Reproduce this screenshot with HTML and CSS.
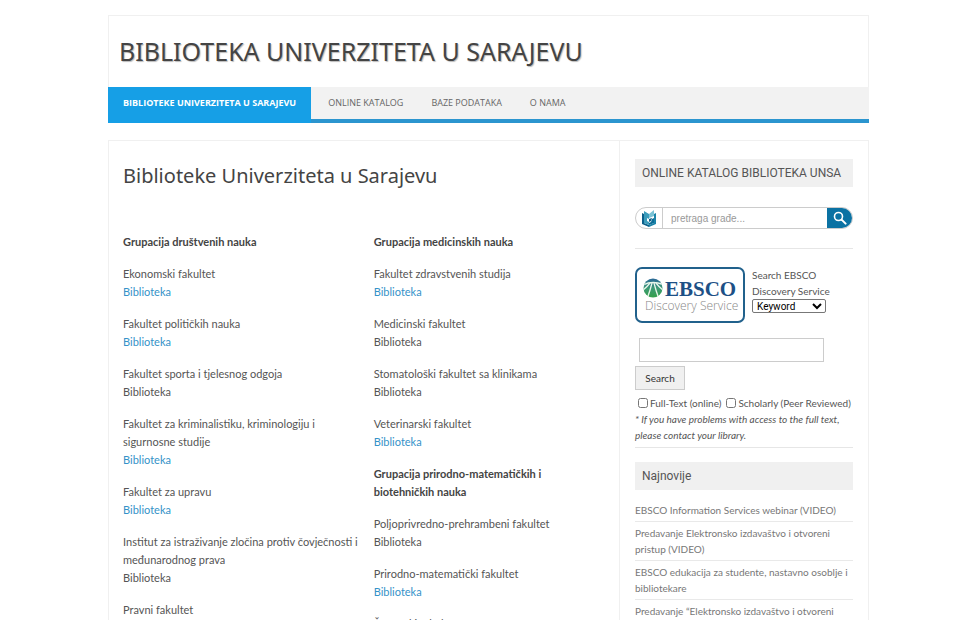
FILE: index.html
```html
<!DOCTYPE html>
<html lang="bs">
<head>
<meta charset="utf-8">
<meta name="viewport" content="width=device-width, initial-scale=1">
<title>Biblioteke Univerziteta u Sarajevu</title>
<link rel="stylesheet" href="styles.css">
</head>
<body>
<header class="site-header">
  <div class="brand">BIBLIOTEKA UNIVERZITETA U SARAJEVU</div>
  <nav class="menu">
    <a class="menu-link active" href="#">BIBLIOTEKE UNIVERZITETA U SARAJEVU</a>
    <a class="menu-link" href="#">ONLINE KATALOG</a>
    <a class="menu-link" href="#">BAZE PODATAKA</a>
    <a class="menu-link" href="#">O NAMA</a>
  </nav>
</header>
<div class="page">
  <main class="content">
    <h1 class="page-title">Biblioteke Univerziteta u Sarajevu</h1>
    <div class="columns">
      <section class="column">
        <h2>Grupacija društvenih nauka</h2>
        <p>Ekonomski fakultet<br><a href="#">Biblioteka</a></p>
        <p>Fakultet političkih nauka<br><a href="#">Biblioteka</a></p>
        <p>Fakultet sporta i tjelesnog odgoja<br>Biblioteka</p>
        <p>Fakultet za kriminalistiku, kriminologiju i sigurnosne studije<br><a href="#">Biblioteka</a></p>
        <p>Fakultet za upravu<br><a href="#">Biblioteka</a></p>
        <p>Institut za istraživanje zločina protiv čovječnosti i međunarodnog prava<br>Biblioteka</p>
        <p>Pravni fakultet</p>
      </section>
      <section class="column">
        <h2>Grupacija medicinskih nauka</h2>
        <p>Fakultet zdravstvenih studija<br><a href="#">Biblioteka</a></p>
        <p>Medicinski fakultet<br>Biblioteka</p>
        <p>Stomatološki fakultet sa klinikama<br>Biblioteka</p>
        <p>Veterinarski fakultet<br><a href="#">Biblioteka</a></p>
        <h2>Grupacija prirodno-matematičkih i biotehničkih nauka</h2>
        <p>Poljoprivredno-prehrambeni fakultet<br>Biblioteka</p>
        <p>Prirodno-matematički fakultet<br><a href="#">Biblioteka</a></p>
        <p>Šumarski fakultet</p>
      </section>
    </div>
  </main>
  <aside class="sidebar">
    <section class="widget">
      <h3 class="widget-title">ONLINE KATALOG BIBLIOTEKA UNSA</h3>
      <form class="catalog">
        <span class="catalog-logo">
          <svg viewBox="0 0 16 18" width="16" height="18" aria-hidden="true">
            <path d="M1 4l2 1v9l5 2v2l-7-3z" fill="#0b5f8a"/>
            <path d="M15 4l-2 1v9l-5 2v2l7-3z" fill="#1a83a8"/>
            <path d="M3 2l5 3v5l-2-1v3l2 1v3l-5-2z" fill="#3b9cbb"/>
            <path d="M13 1L8 5v4l5-2z" fill="#7cc3d6"/>
            <path d="M13 9l-2 1-1 3-2 1v2l5-2z" fill="#0b6c96"/>
            <path d="M8 10l3-1-1 3-2 1z" fill="#0b5f8a"/>
          </svg>
        </span>
        <input class="catalog-input" type="text" placeholder="pretraga građe..." aria-label="pretraga građe">
        <button class="catalog-button" type="button" aria-label="Traži">
          <svg viewBox="0 0 14 14" width="14" height="14" aria-hidden="true">
            <circle cx="5.500" cy="5.500" r="4" fill="none" stroke="#fff" stroke-width="1.600"/>
            <path d="M8.600 8.600l4 4" stroke="#fff" stroke-width="2" stroke-linecap="round"/>
          </svg>
        </button>
      </form>
    </section>
    <section class="widget compact">
      <form>
        <div class="ebsco">
          <svg class="ebsco-logo" viewBox="0 0 110 56" width="110" height="56" role="img" aria-label="EBSCO Discovery Service">
            <defs>
              <linearGradient id="field" x1="0" y1="0" x2="0" y2="1">
                <stop offset="0" stop-color="#2a6797"/>
                <stop offset=".5" stop-color="#3d9a76"/>
                <stop offset="1" stop-color="#35a04a"/>
              </linearGradient>
              <clipPath id="disc"><circle cx="18" cy="21" r="9.500"/></clipPath>
            </defs>
            <rect x="1" y="1" width="108" height="54" rx="6" fill="#fff" stroke="#21618c" stroke-width="2"/>
            <circle cx="18" cy="21" r="9.500" fill="url(#field)"/>
            <g clip-path="url(#disc)" fill="none" stroke="#e8f6ea" stroke-width="1.300">
              <path d="M8 18q10-5 21 0"/>
              <path d="M17 16q-2 8-5 16M19 16q2 8 5 16M15 16q-3 4-8 8M21 16q3 4 8 8"/>
            </g>
            <text x="30" y="29" class="logo-name">EBSCO</text>
            <text x="10" y="43" class="logo-sub">Discovery Service</text>
          </svg>
          <div class="ebsco-side">
            <label for="field-type">Search EBSCO Discovery Service</label>
            <select id="field-type" class="field-type"><option>Keyword</option><option>Title</option><option>Author</option></select>
          </div>
        </div>
        <input class="query" type="text" aria-label="Search EBSCO">
        <button class="search" type="button">Search</button>
        <div class="limits">
          <label><input type="checkbox">Full-Text (online)</label>
          <label><input type="checkbox">Scholarly (Peer Reviewed)</label>
        </div>
        <p class="note">* If you have problems with access to the full text, please contact your library.</p>
      </form>
    </section>
    <section class="widget">
      <h3 class="widget-title">Najnovije</h3>
      <ul class="news">
        <li><a href="#">EBSCO Information Services webinar (VIDEO)</a></li>
        <li><a href="#">Predavanje Elektronsko izdavaštvo i otvoreni pristup (VIDEO)</a></li>
        <li><a href="#">EBSCO edukacija za studente, nastavno osoblje i bibliotekare</a></li>
        <li><a href="#">Predavanje “Elektronsko izdavaštvo i otvoreni</a></li>
      </ul>
    </section>
  </aside>
</div>
</body>
</html>
```
FILE: styles.css
```css
* { box-sizing: border-box; }
html { height: 100%; overflow: hidden; }
body {
  margin: 0;
  padding: 15px 106px 0 108px;
  background: #fff;
  color: #555;
  font: 11px/18px Lato, "Noto Sans", sans-serif;
}
a { color: #3492c8; text-decoration: none; }
h1, h2, h3, p, ul { margin: 0; padding: 0; }
input, button, select { font-family: inherit; margin: 0; }

.site-header { border: 1px solid #f0f0f0; border-bottom: 0; }
.brand {
  padding: 17px 10px 18px;
  color: #444;
  font-family: "Noto Sans", sans-serif;
  font-size: 25px;
  line-height: 36px;
  text-shadow: 1px 1px 1px #bbb;
  white-space: nowrap;
}
.menu {
  display: flex;
  margin: 0 -1px;
  background: #f2f2f2;
  border-bottom: 4px solid #2b95cf;
  font-family: "Open Sans", sans-serif;
}
.menu-link {
  padding: 0 14px;
  color: #666;
  font-size: 9px;
  line-height: 32px;
}
.menu-link.active {
  margin: 0 3px -4px 0;
  padding: 0 15px 4px;
  background: #169fe6;
  color: #fff;
  font-weight: 700;
}

.page {
  display: grid;
  grid-template-columns: minmax(0, 1fr) 249px;
  margin-top: 17px;
  border: 1px solid #f0f0f0;
  border-bottom: 0;
}
.content { padding: 19px 14px 0; }
.page-title {
  color: #444;
  font-family: "Noto Sans", sans-serif;
  font-size: 20px;
  font-weight: 400;
  line-height: 32px;
}
.columns {
  display: grid;
  grid-template-columns: 51fr 49fr;
  gap: 10px;
  margin-top: 41px;
}
.column h2 {
  margin-bottom: 14px;
  padding-right: 40px;
  color: #444;
  font-size: 11px;
  font-weight: 700;
  line-height: 18px;
}
.column p { margin-bottom: 14px; }

.sidebar {
  padding: 18px 15px 0;
  border-left: 1px solid #f0f0f0;
  line-height: 16px;
}
.widget { margin-bottom: 18px; }
.widget.compact { margin-bottom: 14px; }
.widget:not(:last-child) { border-bottom: 1px solid #e6e6e6; }
.widget-title {
  padding: 0 7px;
  background: #f0f0f0;
  color: #555;
  font-family: Roboto, sans-serif;
  font-size: 12px;
  font-weight: 400;
  line-height: 28px;
  white-space: nowrap;
}
.catalog {
  display: flex;
  height: 22px;
  margin: 20px 0 19px;
  border: 1px solid #ccc;
  border-radius: 11px;
  overflow: hidden;
}
.catalog-logo { display: grid; place-items: center; width: 27px; border-right: 1px solid #ccc; }
.catalog-input { flex: 1; min-width: 0; padding: 0 8px; border: 0; font: 10px "Liberation Sans", sans-serif; }
.catalog-input::placeholder { color: #999; }
.catalog-button { display: grid; place-items: center; width: 26px; margin: -1px; padding: 0; border: 0; background: #0b72a3; }

.ebsco { display: flex; gap: 7px; }
.ebsco-logo { flex: none; }
.logo-name { fill: #1d5086; font: bold 21px "Liberation Serif", serif; }
.logo-sub { fill: #888; font: 300 12px "Open Sans", sans-serif; }
.ebsco-side { font-size: 10px; }
.ebsco-side label { display: block; }
.field-type { display: block; width: 74px; height: 14px; padding: 0; border: 1px solid #777; border-radius: 2px; background: #fff; color: #000; font-family: Roboto, sans-serif; font-size: 10px; }
.query { display: block; width: 185px; height: 24px; margin: 15px 0 4px 4px; border: 1px solid #ccc; }
.search { width: 50px; height: 24px; padding: 0; border: 1px solid #ccc; background: #f0f0f0; color: #333; font-size: 10px; }
.limits { display: flex; gap: 5px; margin: 5px 0 0 3px; font-size: 10px; white-space: nowrap; }
.limits label { display: flex; align-items: center; gap: 2px; }
.limits input { width: 10px; height: 10px; }
.note { padding-bottom: 4px; font-size: 10px; font-style: italic; }
.news { margin-top: 9px; list-style: none; font-size: 10px; }
.news li { padding: 3px 0; border-bottom: 1px solid #e9e9e9; }
.news a { display: block; color: #777; }
```
